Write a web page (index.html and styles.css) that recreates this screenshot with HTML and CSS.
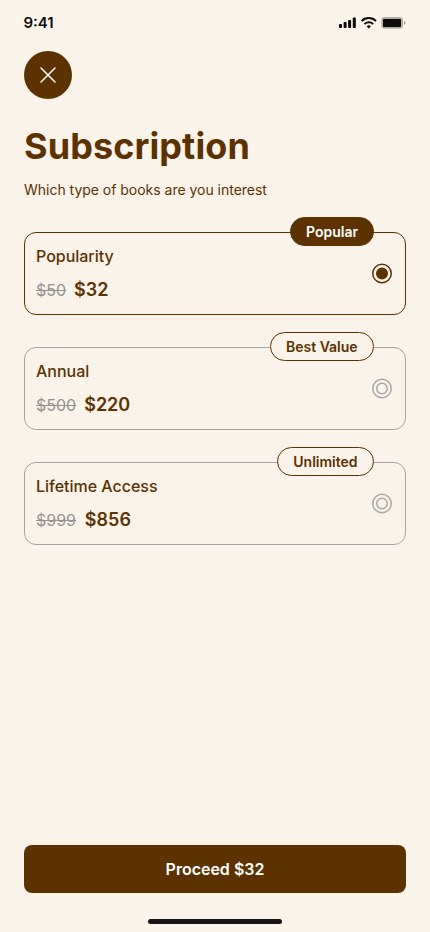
FILE: index.html
```html
<!DOCTYPE html>
<html lang="en">
<head>
<meta charset="utf-8">
<title>Subscription</title>
<link rel="stylesheet" href="styles.css">
</head>
<body>
<div class="screen">
  <header class="status">
    <span class="time">9:41</span>
    <svg class="status-icons" width="68" height="14" viewBox="0 0 68 14">
      <g fill="#0b0b0b">
        <rect x="1" y="8" width="3" height="4" rx=".8"/>
        <rect x="5.6" y="6" width="3" height="6" rx=".8"/>
        <rect x="10.1" y="4" width="3" height="8" rx=".8"/>
        <rect x="14.8" y="1.4" width="3" height="10.6" rx=".8"/>
      </g>
      <g fill="none" stroke="#0b0b0b" stroke-width="2">
        <path d="M23.6 5.1a10.2 10.2 0 0 1 14.4 0"/>
        <path d="M26.5 8.1a6.1 6.1 0 0 1 8.6 0"/>
      </g>
      <path d="M28.7 10.2a3 3 0 0 1 4.2 0L30.8 12.4z" fill="#0b0b0b"/>
      <rect x="43.4" y="1.1" width="21.6" height="11.6" rx="3.4" fill="#0b0b0b" fill-opacity=".3"/>
      <rect x="45" y="3" width="18" height="8" rx="1" fill="#0b0b0b"/>
      <path d="M66 5v4q1.5-.6 1.5-2T66 5z" fill="#0b0b0b" fill-opacity=".35"/>
    </svg>
  </header>
  <button class="close" aria-label="Close">
    <svg width="24" height="24" viewBox="0 0 24 24"><path d="M5 5l14 14M19 5L5 19" fill="none" stroke="#fff" stroke-width="1.5" stroke-linecap="round"/></svg>
  </button>
  <h1>Subscription</h1>
  <p class="subtitle">Which type of books are you interest</p>
  <main class="plans">
    <section class="plan selected">
      <span class="badge">Popular</span>
      <div>
        <h2>Popularity</h2>
        <div class="prices"><del>$50</del><strong>$32</strong></div>
      </div>
      <svg class="radio" viewBox="0 0 20 21"><circle cx="10" cy="10.5" r="9.25"/><circle class="dot" cx="10" cy="10.5" r="5.25"/></svg>
    </section>
    <section class="plan">
      <span class="badge">Best Value</span>
      <div>
        <h2>Annual</h2>
        <div class="prices"><del>$500</del><strong>$220</strong></div>
      </div>
      <svg class="radio" viewBox="0 0 20 21"><circle cx="10" cy="10.5" r="9.25"/><circle class="dot" cx="10" cy="10.5" r="5.25"/></svg>
    </section>
    <section class="plan">
      <span class="badge">Unlimited</span>
      <div>
        <h2>Lifetime Access</h2>
        <div class="prices"><del>$999</del><strong>$856</strong></div>
      </div>
      <svg class="radio" viewBox="0 0 20 21"><circle cx="10" cy="10.5" r="9.25"/><circle class="dot" cx="10" cy="10.5" r="5.25"/></svg>
    </section>
  </main>
  <button class="proceed">Proceed $32</button>
  <div class="home"></div>
</div>
</body>
</html>
```
FILE: styles.css
```css
* { box-sizing: border-box; }
body {
  margin: 0;
  background: #faf3ea;
  color: #5b3200;
  font-family: Inter, "Liberation Sans", sans-serif;
}
.screen {
  height: 932px;
  padding: 0 24px;
  display: flex;
  flex-direction: column;
  overflow: hidden;
}
.status {
  height: 51px;
  padding-top: 12px;
  display: flex;
  justify-content: space-between;
  align-items: flex-start;
}
.time {
  color: #0b0b0b;
  font-size: 15px;
  font-weight: 600;
  line-height: 22px;
  margin-left: -0.6px;
}
.status-icons { margin-top: 4px; }
button {
  border: 0;
  padding: 0;
  font: inherit;
  color: #fff;
  background: #5b3200;
}
.close {
  width: 48px;
  height: 48px;
  border-radius: 50%;
  display: grid;
  place-items: center;
}
h1 {
  margin: 24px 0 0;
  font-size: 36px;
  font-weight: 700;
  line-height: 46px;
  letter-spacing: 0.09px;
}
.subtitle {
  margin: 10px 0 0;
  font-size: 14px;
  line-height: 22px;
  letter-spacing: -0.02px;
}
.plans {
  margin-top: 31px;
  display: flex;
  flex-direction: column;
  gap: 32px;
}
.plan {
  position: relative;
  height: 83px;
  padding: 11px 13px 0 11px;
  border: 1px solid #a3a3a3;
  border-radius: 12px;
  display: flex;
  justify-content: space-between;
}
.plan.selected { border-color: #5b3200; }
.badge {
  position: absolute;
  top: -16px;
  right: 31px;
  height: 29px;
  padding: 0 15.4px;
  border: 1px solid #5b3200;
  border-radius: 15px;
  background: #faf3ea;
  font-size: 14px;
  font-weight: 600;
  line-height: 28px;
}
.selected .badge { padding: 0 15px; background: #5b3200; color: #fff; }
h2 {
  margin: 0;
  font-size: 16px;
  font-weight: 500;
  line-height: 24px;
  letter-spacing: -0.02px;
}
.prices {
  margin-top: 9px;
  display: flex;
  align-items: center;
  gap: 8px;
  line-height: 26px;
}
.prices del { color: #929292; font-size: 16px; }
.prices strong { font-size: 18px; font-weight: 600; }
.plan:last-child .prices { gap: 8.8px; }
.radio {
  width: 20px;
  height: 21px;
  margin-top: 19px;
  fill: none;
  stroke: #a8a8a8;
  stroke-width: 1.5;
}
.selected .radio { stroke: #5b3200; }
.selected .dot { fill: #5b3200; }
.proceed {
  margin-top: auto;
  height: 48px;
  flex: none;
  border-radius: 8px;
  font-size: 16px;
  font-weight: 600;
}
.home {
  width: 134px;
  height: 5px;
  flex: none;
  margin: 26px auto 8px;
  border-radius: 3px;
  background: #17141a;
}
```
